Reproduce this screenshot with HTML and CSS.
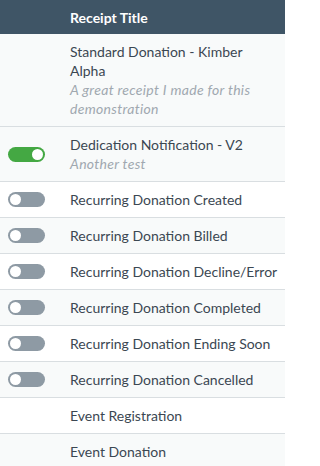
FILE: index.html
```html
<!DOCTYPE html>
<html>
<head>
<meta charset="utf-8">
<link rel="stylesheet" href="styles.css">
</head>
<body>
<div class="table">
  <div class="head">
    <div class="cell-toggle"></div>
    <div class="cell-title">Receipt Title</div>
  </div>
  <div class="row shade">
    <div class="cell-toggle"></div>
    <div class="cell-title">Standard Donation - Kimber Alpha<div class="sub">A great receipt I made for this demonstration</div></div>
  </div>
  <div class="row shade">
    <div class="cell-toggle"><span class="toggle on"></span></div>
    <div class="cell-title">Dedication Notification - V2<div class="sub">Another test</div></div>
  </div>
  <div class="row">
    <div class="cell-toggle"><span class="toggle"></span></div>
    <div class="cell-title">Recurring Donation Created</div>
  </div>
  <div class="row shade">
    <div class="cell-toggle"><span class="toggle"></span></div>
    <div class="cell-title">Recurring Donation Billed</div>
  </div>
  <div class="row">
    <div class="cell-toggle"><span class="toggle"></span></div>
    <div class="cell-title">Recurring Donation Decline/Error</div>
  </div>
  <div class="row shade">
    <div class="cell-toggle"><span class="toggle"></span></div>
    <div class="cell-title">Recurring Donation Completed</div>
  </div>
  <div class="row">
    <div class="cell-toggle"><span class="toggle"></span></div>
    <div class="cell-title">Recurring Donation Ending Soon</div>
  </div>
  <div class="row shade">
    <div class="cell-toggle"><span class="toggle"></span></div>
    <div class="cell-title">Recurring Donation Cancelled</div>
  </div>
  <div class="row">
    <div class="cell-toggle"></div>
    <div class="cell-title">Event Registration</div>
  </div>
  <div class="row shade">
    <div class="cell-toggle"></div>
    <div class="cell-title">Event Donation</div>
  </div>
</div>
</body>
</html>
```

FILE: styles.css
```css
html, body {
  margin: 0;
  padding: 0;
  background: #ffffff;
}
body {
  font-family: "Lato", "Open Sans", sans-serif;
  font-size: 14px;
  color: #3b4752;
  overflow: hidden;
}
.table {
  display: flex;
  flex-direction: column;
  width: 285px;
}
.head {
  display: flex;
  align-items: center;
  height: 34px;
  background: #3f5566;
  color: #ffffff;
  font-weight: 700;
}
.row {
  display: flex;
  align-items: center;
  border-bottom: 1px solid #d9dee1;
  background: #ffffff;
}
.row.shade {
  background: #f8fafa;
}
.cell-toggle {
  width: 62px;
  padding-left: 8px;
  flex: none;
  display: flex;
  align-items: center;
}
.cell-title {
  flex: 1;
  min-width: 0;
  padding: 8px 6px 8px 0;
  line-height: 19px;
}
.head .cell-title {
  padding: 0;
}
.sub {
  font-style: italic;
  color: #a0a8b0;
  letter-spacing: 0.3px;
}
.toggle {
  position: relative;
  display: block;
  width: 37px;
  height: 15px;
  border-radius: 8px;
  background: #8e9aa4;
}
.toggle::after {
  content: "";
  position: absolute;
  top: 2px;
  left: 2px;
  width: 11px;
  height: 11px;
  border-radius: 50%;
  background: #ffffff;
}
.toggle.on {
  background: #44a843;
}
.toggle.on::after {
  left: 24px;
}
```
